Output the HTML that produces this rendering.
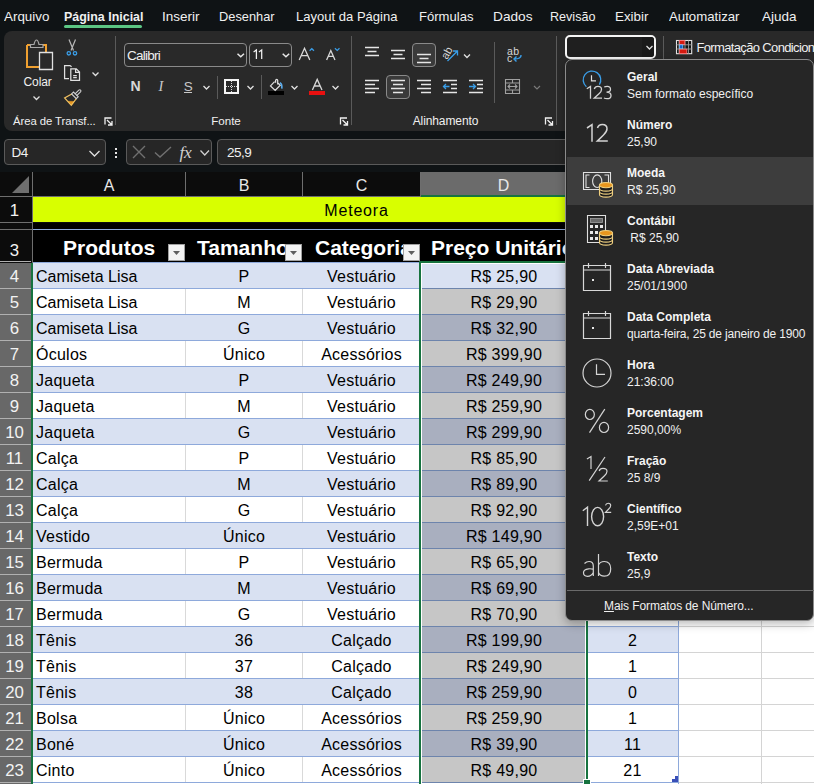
<!DOCTYPE html>
<html><head><meta charset="utf-8"><style>
html,body{margin:0;padding:0;}
body{width:814px;height:784px;overflow:hidden;position:relative;background:#131416;font-family:"Liberation Sans", sans-serif;}
.t{position:absolute;white-space:nowrap;}
.r{position:absolute;}
svg{overflow:visible;}
</style></head><body>
<div class="r" style="left:0px;top:0px;width:814px;height:784px;background:#0f1315;"></div>
<div class="r" style="left:4px;top:31px;width:830px;height:100px;background:#292929;border-radius:8px;"></div>
<div class="t" style="left:4px;top:9.57px;font-size:13.5px;line-height:13.5px;color:#f0f0f0;font-weight:normal;white-space:nowrap;"><span style="display:inline-block;transform-origin:0 0;transform:scaleX(0.993);">Arquivo</span></div>
<div class="t" style="left:64px;top:9.57px;font-size:13.5px;line-height:13.5px;color:#f0f0f0;font-weight:bold;white-space:nowrap;"><span style="display:inline-block;transform-origin:0 0;transform:scaleX(0.921);">Página Inicial</span></div>
<div class="t" style="left:162px;top:9.57px;font-size:13.5px;line-height:13.5px;color:#f0f0f0;font-weight:normal;white-space:nowrap;"><span style="display:inline-block;transform-origin:0 0;transform:scaleX(1.000);">Inserir</span></div>
<div class="t" style="left:219px;top:9.57px;font-size:13.5px;line-height:13.5px;color:#f0f0f0;font-weight:normal;white-space:nowrap;"><span style="display:inline-block;transform-origin:0 0;transform:scaleX(0.949);">Desenhar</span></div>
<div class="t" style="left:296px;top:9.57px;font-size:13.5px;line-height:13.5px;color:#f0f0f0;font-weight:normal;white-space:nowrap;"><span style="display:inline-block;transform-origin:0 0;transform:scaleX(0.966);">Layout da Página</span></div>
<div class="t" style="left:419px;top:9.57px;font-size:13.5px;line-height:13.5px;color:#f0f0f0;font-weight:normal;white-space:nowrap;"><span style="display:inline-block;transform-origin:0 0;transform:scaleX(0.968);">Fórmulas</span></div>
<div class="t" style="left:493px;top:9.57px;font-size:13.5px;line-height:13.5px;color:#f0f0f0;font-weight:normal;white-space:nowrap;"><span style="display:inline-block;transform-origin:0 0;transform:scaleX(1.013);">Dados</span></div>
<div class="t" style="left:550px;top:9.57px;font-size:13.5px;line-height:13.5px;color:#f0f0f0;font-weight:normal;white-space:nowrap;"><span style="display:inline-block;transform-origin:0 0;transform:scaleX(0.932);">Revisão</span></div>
<div class="t" style="left:615px;top:9.57px;font-size:13.5px;line-height:13.5px;color:#f0f0f0;font-weight:normal;white-space:nowrap;"><span style="display:inline-block;transform-origin:0 0;transform:scaleX(0.991);">Exibir</span></div>
<div class="t" style="left:669px;top:9.57px;font-size:13.5px;line-height:13.5px;color:#f0f0f0;font-weight:normal;white-space:nowrap;"><span style="display:inline-block;transform-origin:0 0;transform:scaleX(0.979);">Automatizar</span></div>
<div class="t" style="left:762px;top:9.57px;font-size:13.5px;line-height:13.5px;color:#f0f0f0;font-weight:normal;white-space:nowrap;"><span style="display:inline-block;transform-origin:0 0;transform:scaleX(1.000);">Ajuda</span></div>
<div class="r" style="left:64px;top:25px;width:78px;height:3px;background:#5cc583;border-radius:2px;"></div>
<div class="r" style="left:0px;top:165px;width:814px;height:7px;background:#0f1315;"></div>
<div class="r" style="left:0px;top:172px;width:814px;height:612px;background:#0c0c0c;"></div>
<div class="r" style="left:33px;top:197px;width:800px;height:25px;background:#d8ff00;"></div>
<div class="r" style="left:33px;top:223px;width:800px;height:6px;background:#000;"></div>
<div class="r" style="left:33px;top:782px;width:800px;height:2px;background:#ffffff;"></div>
<div class="r" style="left:33px;top:230px;width:800px;height:32px;background:#000;"></div>
<div class="r" style="left:33px;top:262px;width:646px;height:27px;background:#d9e1f2;"></div>
<div class="r" style="left:679px;top:262px;width:200px;height:27px;background:#ffffff;"></div>
<div class="r" style="left:33px;top:288px;width:646px;height:27px;background:#ffffff;"></div>
<div class="r" style="left:679px;top:288px;width:200px;height:27px;background:#ffffff;"></div>
<div class="r" style="left:33px;top:314px;width:646px;height:27px;background:#d9e1f2;"></div>
<div class="r" style="left:679px;top:314px;width:200px;height:27px;background:#ffffff;"></div>
<div class="r" style="left:33px;top:340px;width:646px;height:27px;background:#ffffff;"></div>
<div class="r" style="left:679px;top:340px;width:200px;height:27px;background:#ffffff;"></div>
<div class="r" style="left:33px;top:366px;width:646px;height:27px;background:#d9e1f2;"></div>
<div class="r" style="left:679px;top:366px;width:200px;height:27px;background:#ffffff;"></div>
<div class="r" style="left:33px;top:392px;width:646px;height:27px;background:#ffffff;"></div>
<div class="r" style="left:679px;top:392px;width:200px;height:27px;background:#ffffff;"></div>
<div class="r" style="left:33px;top:418px;width:646px;height:27px;background:#d9e1f2;"></div>
<div class="r" style="left:679px;top:418px;width:200px;height:27px;background:#ffffff;"></div>
<div class="r" style="left:33px;top:444px;width:646px;height:27px;background:#ffffff;"></div>
<div class="r" style="left:679px;top:444px;width:200px;height:27px;background:#ffffff;"></div>
<div class="r" style="left:33px;top:470px;width:646px;height:27px;background:#d9e1f2;"></div>
<div class="r" style="left:679px;top:470px;width:200px;height:27px;background:#ffffff;"></div>
<div class="r" style="left:33px;top:496px;width:646px;height:27px;background:#ffffff;"></div>
<div class="r" style="left:679px;top:496px;width:200px;height:27px;background:#ffffff;"></div>
<div class="r" style="left:33px;top:522px;width:646px;height:27px;background:#d9e1f2;"></div>
<div class="r" style="left:679px;top:522px;width:200px;height:27px;background:#ffffff;"></div>
<div class="r" style="left:33px;top:548px;width:646px;height:27px;background:#ffffff;"></div>
<div class="r" style="left:679px;top:548px;width:200px;height:27px;background:#ffffff;"></div>
<div class="r" style="left:33px;top:574px;width:646px;height:27px;background:#d9e1f2;"></div>
<div class="r" style="left:679px;top:574px;width:200px;height:27px;background:#ffffff;"></div>
<div class="r" style="left:33px;top:600px;width:646px;height:27px;background:#ffffff;"></div>
<div class="r" style="left:679px;top:600px;width:200px;height:27px;background:#ffffff;"></div>
<div class="r" style="left:33px;top:626px;width:646px;height:27px;background:#d9e1f2;"></div>
<div class="r" style="left:679px;top:626px;width:200px;height:27px;background:#ffffff;"></div>
<div class="r" style="left:33px;top:652px;width:646px;height:27px;background:#ffffff;"></div>
<div class="r" style="left:679px;top:652px;width:200px;height:27px;background:#ffffff;"></div>
<div class="r" style="left:33px;top:678px;width:646px;height:27px;background:#d9e1f2;"></div>
<div class="r" style="left:679px;top:678px;width:200px;height:27px;background:#ffffff;"></div>
<div class="r" style="left:33px;top:704px;width:646px;height:27px;background:#ffffff;"></div>
<div class="r" style="left:679px;top:704px;width:200px;height:27px;background:#ffffff;"></div>
<div class="r" style="left:33px;top:730px;width:646px;height:27px;background:#d9e1f2;"></div>
<div class="r" style="left:679px;top:730px;width:200px;height:27px;background:#ffffff;"></div>
<div class="r" style="left:33px;top:756px;width:646px;height:27px;background:#ffffff;"></div>
<div class="r" style="left:679px;top:756px;width:200px;height:27px;background:#ffffff;"></div>
<div class="r" style="left:679px;top:288px;width:200px;height:1px;background:#d4d4d4;"></div>
<div class="r" style="left:679px;top:314px;width:200px;height:1px;background:#d4d4d4;"></div>
<div class="r" style="left:679px;top:340px;width:200px;height:1px;background:#d4d4d4;"></div>
<div class="r" style="left:679px;top:366px;width:200px;height:1px;background:#d4d4d4;"></div>
<div class="r" style="left:679px;top:392px;width:200px;height:1px;background:#d4d4d4;"></div>
<div class="r" style="left:679px;top:418px;width:200px;height:1px;background:#d4d4d4;"></div>
<div class="r" style="left:679px;top:444px;width:200px;height:1px;background:#d4d4d4;"></div>
<div class="r" style="left:679px;top:470px;width:200px;height:1px;background:#d4d4d4;"></div>
<div class="r" style="left:679px;top:496px;width:200px;height:1px;background:#d4d4d4;"></div>
<div class="r" style="left:679px;top:522px;width:200px;height:1px;background:#d4d4d4;"></div>
<div class="r" style="left:679px;top:548px;width:200px;height:1px;background:#d4d4d4;"></div>
<div class="r" style="left:679px;top:574px;width:200px;height:1px;background:#d4d4d4;"></div>
<div class="r" style="left:679px;top:600px;width:200px;height:1px;background:#d4d4d4;"></div>
<div class="r" style="left:679px;top:626px;width:200px;height:1px;background:#d4d4d4;"></div>
<div class="r" style="left:679px;top:652px;width:200px;height:1px;background:#d4d4d4;"></div>
<div class="r" style="left:679px;top:678px;width:200px;height:1px;background:#d4d4d4;"></div>
<div class="r" style="left:679px;top:704px;width:200px;height:1px;background:#d4d4d4;"></div>
<div class="r" style="left:679px;top:730px;width:200px;height:1px;background:#d4d4d4;"></div>
<div class="r" style="left:679px;top:756px;width:200px;height:1px;background:#d4d4d4;"></div>
<div class="r" style="left:679px;top:782px;width:200px;height:1px;background:#d4d4d4;"></div>
<div class="r" style="left:761px;top:262px;width:1px;height:522px;background:#d4d4d4;"></div>
<div class="r" style="left:185px;top:289px;width:1px;height:25px;background:#d9d9d9;"></div>
<div class="r" style="left:185px;top:341px;width:1px;height:25px;background:#d9d9d9;"></div>
<div class="r" style="left:185px;top:393px;width:1px;height:25px;background:#d9d9d9;"></div>
<div class="r" style="left:185px;top:445px;width:1px;height:25px;background:#d9d9d9;"></div>
<div class="r" style="left:185px;top:497px;width:1px;height:25px;background:#d9d9d9;"></div>
<div class="r" style="left:185px;top:549px;width:1px;height:25px;background:#d9d9d9;"></div>
<div class="r" style="left:185px;top:601px;width:1px;height:25px;background:#d9d9d9;"></div>
<div class="r" style="left:185px;top:653px;width:1px;height:25px;background:#d9d9d9;"></div>
<div class="r" style="left:185px;top:705px;width:1px;height:25px;background:#d9d9d9;"></div>
<div class="r" style="left:185px;top:757px;width:1px;height:25px;background:#d9d9d9;"></div>
<div class="r" style="left:302px;top:289px;width:1px;height:25px;background:#d9d9d9;"></div>
<div class="r" style="left:302px;top:341px;width:1px;height:25px;background:#d9d9d9;"></div>
<div class="r" style="left:302px;top:393px;width:1px;height:25px;background:#d9d9d9;"></div>
<div class="r" style="left:302px;top:445px;width:1px;height:25px;background:#d9d9d9;"></div>
<div class="r" style="left:302px;top:497px;width:1px;height:25px;background:#d9d9d9;"></div>
<div class="r" style="left:302px;top:549px;width:1px;height:25px;background:#d9d9d9;"></div>
<div class="r" style="left:302px;top:601px;width:1px;height:25px;background:#d9d9d9;"></div>
<div class="r" style="left:302px;top:653px;width:1px;height:25px;background:#d9d9d9;"></div>
<div class="r" style="left:302px;top:705px;width:1px;height:25px;background:#d9d9d9;"></div>
<div class="r" style="left:302px;top:757px;width:1px;height:25px;background:#d9d9d9;"></div>
<div class="r" style="left:420px;top:289px;width:1px;height:25px;background:#d9d9d9;"></div>
<div class="r" style="left:420px;top:341px;width:1px;height:25px;background:#d9d9d9;"></div>
<div class="r" style="left:420px;top:393px;width:1px;height:25px;background:#d9d9d9;"></div>
<div class="r" style="left:420px;top:445px;width:1px;height:25px;background:#d9d9d9;"></div>
<div class="r" style="left:420px;top:497px;width:1px;height:25px;background:#d9d9d9;"></div>
<div class="r" style="left:420px;top:549px;width:1px;height:25px;background:#d9d9d9;"></div>
<div class="r" style="left:420px;top:601px;width:1px;height:25px;background:#d9d9d9;"></div>
<div class="r" style="left:420px;top:653px;width:1px;height:25px;background:#d9d9d9;"></div>
<div class="r" style="left:420px;top:705px;width:1px;height:25px;background:#d9d9d9;"></div>
<div class="r" style="left:420px;top:757px;width:1px;height:25px;background:#d9d9d9;"></div>
<div class="r" style="left:586px;top:289px;width:1px;height:25px;background:#d9d9d9;"></div>
<div class="r" style="left:586px;top:341px;width:1px;height:25px;background:#d9d9d9;"></div>
<div class="r" style="left:586px;top:393px;width:1px;height:25px;background:#d9d9d9;"></div>
<div class="r" style="left:586px;top:445px;width:1px;height:25px;background:#d9d9d9;"></div>
<div class="r" style="left:586px;top:497px;width:1px;height:25px;background:#d9d9d9;"></div>
<div class="r" style="left:586px;top:549px;width:1px;height:25px;background:#d9d9d9;"></div>
<div class="r" style="left:586px;top:601px;width:1px;height:25px;background:#d9d9d9;"></div>
<div class="r" style="left:586px;top:653px;width:1px;height:25px;background:#d9d9d9;"></div>
<div class="r" style="left:586px;top:705px;width:1px;height:25px;background:#d9d9d9;"></div>
<div class="r" style="left:586px;top:757px;width:1px;height:25px;background:#d9d9d9;"></div>
<div class="r" style="left:33px;top:229px;width:646px;height:1px;background:#8ea9db;"></div>
<div class="r" style="left:33px;top:262px;width:646px;height:1px;background:#8ea9db;"></div>
<div class="r" style="left:33px;top:288px;width:646px;height:1px;background:#8ea9db;"></div>
<div class="r" style="left:33px;top:314px;width:646px;height:1px;background:#8ea9db;"></div>
<div class="r" style="left:33px;top:340px;width:646px;height:1px;background:#8ea9db;"></div>
<div class="r" style="left:33px;top:366px;width:646px;height:1px;background:#8ea9db;"></div>
<div class="r" style="left:33px;top:392px;width:646px;height:1px;background:#8ea9db;"></div>
<div class="r" style="left:33px;top:418px;width:646px;height:1px;background:#8ea9db;"></div>
<div class="r" style="left:33px;top:444px;width:646px;height:1px;background:#8ea9db;"></div>
<div class="r" style="left:33px;top:470px;width:646px;height:1px;background:#8ea9db;"></div>
<div class="r" style="left:33px;top:496px;width:646px;height:1px;background:#8ea9db;"></div>
<div class="r" style="left:33px;top:522px;width:646px;height:1px;background:#8ea9db;"></div>
<div class="r" style="left:33px;top:548px;width:646px;height:1px;background:#8ea9db;"></div>
<div class="r" style="left:33px;top:574px;width:646px;height:1px;background:#8ea9db;"></div>
<div class="r" style="left:33px;top:600px;width:646px;height:1px;background:#8ea9db;"></div>
<div class="r" style="left:33px;top:626px;width:646px;height:1px;background:#8ea9db;"></div>
<div class="r" style="left:33px;top:652px;width:646px;height:1px;background:#8ea9db;"></div>
<div class="r" style="left:33px;top:678px;width:646px;height:1px;background:#8ea9db;"></div>
<div class="r" style="left:33px;top:704px;width:646px;height:1px;background:#8ea9db;"></div>
<div class="r" style="left:33px;top:730px;width:646px;height:1px;background:#8ea9db;"></div>
<div class="r" style="left:33px;top:756px;width:646px;height:1px;background:#8ea9db;"></div>
<div class="r" style="left:33px;top:782px;width:646px;height:1px;background:#8ea9db;"></div>
<div class="r" style="left:678px;top:229px;width:1px;height:555px;background:#8ea9db;"></div>
<div class="r" style="left:422px;top:289px;width:164px;height:25px;background:#c6c6c6;"></div>
<div class="r" style="left:421px;top:288px;width:165px;height:1px;background:#6d84ac;"></div>
<div class="r" style="left:422px;top:315px;width:164px;height:25px;background:#a9afbf;"></div>
<div class="r" style="left:421px;top:314px;width:165px;height:1px;background:#6d84ac;"></div>
<div class="r" style="left:422px;top:341px;width:164px;height:25px;background:#c6c6c6;"></div>
<div class="r" style="left:421px;top:340px;width:165px;height:1px;background:#6d84ac;"></div>
<div class="r" style="left:422px;top:367px;width:164px;height:25px;background:#a9afbf;"></div>
<div class="r" style="left:421px;top:366px;width:165px;height:1px;background:#6d84ac;"></div>
<div class="r" style="left:422px;top:393px;width:164px;height:25px;background:#c6c6c6;"></div>
<div class="r" style="left:421px;top:392px;width:165px;height:1px;background:#6d84ac;"></div>
<div class="r" style="left:422px;top:419px;width:164px;height:25px;background:#a9afbf;"></div>
<div class="r" style="left:421px;top:418px;width:165px;height:1px;background:#6d84ac;"></div>
<div class="r" style="left:422px;top:445px;width:164px;height:25px;background:#c6c6c6;"></div>
<div class="r" style="left:421px;top:444px;width:165px;height:1px;background:#6d84ac;"></div>
<div class="r" style="left:422px;top:471px;width:164px;height:25px;background:#a9afbf;"></div>
<div class="r" style="left:421px;top:470px;width:165px;height:1px;background:#6d84ac;"></div>
<div class="r" style="left:422px;top:497px;width:164px;height:25px;background:#c6c6c6;"></div>
<div class="r" style="left:421px;top:496px;width:165px;height:1px;background:#6d84ac;"></div>
<div class="r" style="left:422px;top:523px;width:164px;height:25px;background:#a9afbf;"></div>
<div class="r" style="left:421px;top:522px;width:165px;height:1px;background:#6d84ac;"></div>
<div class="r" style="left:422px;top:549px;width:164px;height:25px;background:#c6c6c6;"></div>
<div class="r" style="left:421px;top:548px;width:165px;height:1px;background:#6d84ac;"></div>
<div class="r" style="left:422px;top:575px;width:164px;height:25px;background:#a9afbf;"></div>
<div class="r" style="left:421px;top:574px;width:165px;height:1px;background:#6d84ac;"></div>
<div class="r" style="left:422px;top:601px;width:164px;height:25px;background:#c6c6c6;"></div>
<div class="r" style="left:421px;top:600px;width:165px;height:1px;background:#6d84ac;"></div>
<div class="r" style="left:422px;top:627px;width:164px;height:25px;background:#a9afbf;"></div>
<div class="r" style="left:421px;top:626px;width:165px;height:1px;background:#6d84ac;"></div>
<div class="r" style="left:422px;top:653px;width:164px;height:25px;background:#c6c6c6;"></div>
<div class="r" style="left:421px;top:652px;width:165px;height:1px;background:#6d84ac;"></div>
<div class="r" style="left:422px;top:679px;width:164px;height:25px;background:#a9afbf;"></div>
<div class="r" style="left:421px;top:678px;width:165px;height:1px;background:#6d84ac;"></div>
<div class="r" style="left:422px;top:705px;width:164px;height:25px;background:#c6c6c6;"></div>
<div class="r" style="left:421px;top:704px;width:165px;height:1px;background:#6d84ac;"></div>
<div class="r" style="left:422px;top:731px;width:164px;height:25px;background:#a9afbf;"></div>
<div class="r" style="left:421px;top:730px;width:165px;height:1px;background:#6d84ac;"></div>
<div class="r" style="left:422px;top:757px;width:164px;height:25px;background:#c6c6c6;"></div>
<div class="r" style="left:421px;top:756px;width:165px;height:1px;background:#6d84ac;"></div>
<div class="r" style="left:421px;top:782px;width:165px;height:1px;background:#6d84ac;"></div>
<div class="r" style="left:419px;top:261px;width:2px;height:523px;background:#17733f;"></div>
<div class="r" style="left:419px;top:261px;width:169px;height:2px;background:#17733f;"></div>
<div class="r" style="left:586px;top:261px;width:2px;height:523px;background:#17733f;"></div>
<div class="r" style="left:421px;top:263px;width:1px;height:521px;background:#ffffff;"></div>
<div class="r" style="left:421px;top:263px;width:165px;height:1px;background:#ffffff;"></div>
<div class="r" style="left:585px;top:263px;width:1px;height:521px;background:#ffffff;"></div>
<div class="r" style="left:584px;top:780px;width:6px;height:6px;background:#17733f;outline:1px solid #fff;"></div>
<div class="r" style="left:672px;top:779px;width:6px;height:3px;background:#3a4fb8;"></div>
<div class="r" style="left:675px;top:776px;width:3px;height:3px;background:#3a4fb8;"></div>
<div class="r" style="left:33px;top:172px;width:553px;height:24px;background:#0c0c0c;"></div>
<div class="r" style="left:421px;top:172px;width:166px;height:23px;background:#6b6b6b;"></div>
<div class="r" style="left:421px;top:195px;width:166px;height:2px;background:#17733f;"></div>
<div class="r" style="left:185px;top:172px;width:1px;height:24px;background:#6e6e6e;"></div>
<div class="r" style="left:302px;top:172px;width:1px;height:24px;background:#6e6e6e;"></div>
<div class="r" style="left:420px;top:172px;width:1px;height:24px;background:#6e6e6e;"></div>
<div class="r" style="left:0px;top:196px;width:421px;height:1px;background:#6e6e6e;"></div>
<svg class="r" style="left:12px;top:176px" width="18" height="18"><path d="M17 0 L17 17 L0 17 Z" fill="#6f6f6f"/></svg>
<div class="r" style="left:32px;top:172px;width:1px;height:612px;background:#6e6e6e;"></div>
<div class="t" style="left:-191.0px;width:600px;text-align:center;top:178.46px;font-size:16px;line-height:16px;color:#e8e8e8;font-weight:normal;">A</div>
<div class="t" style="left:-56.0px;width:600px;text-align:center;top:178.46px;font-size:16px;line-height:16px;color:#e8e8e8;font-weight:normal;">B</div>
<div class="t" style="left:61.5px;width:600px;text-align:center;top:178.46px;font-size:16px;line-height:16px;color:#e8e8e8;font-weight:normal;">C</div>
<div class="t" style="left:203.5px;width:600px;text-align:center;top:178.46px;font-size:16px;line-height:16px;color:#e8e8e8;font-weight:normal;">D</div>
<div class="r" style="left:0px;top:263px;width:31px;height:521px;background:#686868;"></div>
<div class="r" style="left:31px;top:263px;width:2px;height:521px;background:#17733f;"></div>
<div class="r" style="left:0px;top:222px;width:32px;height:1px;background:#6e6e6e;"></div>
<div class="r" style="left:0px;top:229px;width:32px;height:1px;background:#6e6e6e;"></div>
<div class="r" style="left:0px;top:261px;width:31px;height:1px;background:#b0b0b0;"></div>
<div class="r" style="left:0px;top:288px;width:31px;height:1px;background:#b0b0b0;"></div>
<div class="r" style="left:0px;top:314px;width:31px;height:1px;background:#b0b0b0;"></div>
<div class="r" style="left:0px;top:340px;width:31px;height:1px;background:#b0b0b0;"></div>
<div class="r" style="left:0px;top:366px;width:31px;height:1px;background:#b0b0b0;"></div>
<div class="r" style="left:0px;top:392px;width:31px;height:1px;background:#b0b0b0;"></div>
<div class="r" style="left:0px;top:418px;width:31px;height:1px;background:#b0b0b0;"></div>
<div class="r" style="left:0px;top:444px;width:31px;height:1px;background:#b0b0b0;"></div>
<div class="r" style="left:0px;top:470px;width:31px;height:1px;background:#b0b0b0;"></div>
<div class="r" style="left:0px;top:496px;width:31px;height:1px;background:#b0b0b0;"></div>
<div class="r" style="left:0px;top:522px;width:31px;height:1px;background:#b0b0b0;"></div>
<div class="r" style="left:0px;top:548px;width:31px;height:1px;background:#b0b0b0;"></div>
<div class="r" style="left:0px;top:574px;width:31px;height:1px;background:#b0b0b0;"></div>
<div class="r" style="left:0px;top:600px;width:31px;height:1px;background:#b0b0b0;"></div>
<div class="r" style="left:0px;top:626px;width:31px;height:1px;background:#b0b0b0;"></div>
<div class="r" style="left:0px;top:652px;width:31px;height:1px;background:#b0b0b0;"></div>
<div class="r" style="left:0px;top:678px;width:31px;height:1px;background:#b0b0b0;"></div>
<div class="r" style="left:0px;top:704px;width:31px;height:1px;background:#b0b0b0;"></div>
<div class="r" style="left:0px;top:730px;width:31px;height:1px;background:#b0b0b0;"></div>
<div class="r" style="left:0px;top:756px;width:31px;height:1px;background:#b0b0b0;"></div>
<div class="r" style="left:0px;top:782px;width:31px;height:1px;background:#b0b0b0;"></div>
<div class="t" style="left:-285.5px;width:600px;text-align:center;top:203.28px;font-size:16.8px;line-height:16.8px;color:#f2f2f2;font-weight:normal;">1</div>
<div class="t" style="left:-285.5px;width:600px;text-align:center;top:242.78px;font-size:16.8px;line-height:16.8px;color:#f2f2f2;font-weight:normal;">3</div>
<div class="t" style="left:-285.5px;width:600px;text-align:center;top:269.28px;font-size:16.8px;line-height:16.8px;color:#f2f2f2;font-weight:normal;">4</div>
<div class="t" style="left:-285.5px;width:600px;text-align:center;top:295.28px;font-size:16.8px;line-height:16.8px;color:#f2f2f2;font-weight:normal;">5</div>
<div class="t" style="left:-285.5px;width:600px;text-align:center;top:321.28px;font-size:16.8px;line-height:16.8px;color:#f2f2f2;font-weight:normal;">6</div>
<div class="t" style="left:-285.5px;width:600px;text-align:center;top:347.28px;font-size:16.8px;line-height:16.8px;color:#f2f2f2;font-weight:normal;">7</div>
<div class="t" style="left:-285.5px;width:600px;text-align:center;top:373.28px;font-size:16.8px;line-height:16.8px;color:#f2f2f2;font-weight:normal;">8</div>
<div class="t" style="left:-285.5px;width:600px;text-align:center;top:399.28px;font-size:16.8px;line-height:16.8px;color:#f2f2f2;font-weight:normal;">9</div>
<div class="t" style="left:-285.5px;width:600px;text-align:center;top:425.28px;font-size:16.8px;line-height:16.8px;color:#f2f2f2;font-weight:normal;">10</div>
<div class="t" style="left:-285.5px;width:600px;text-align:center;top:451.28px;font-size:16.8px;line-height:16.8px;color:#f2f2f2;font-weight:normal;">11</div>
<div class="t" style="left:-285.5px;width:600px;text-align:center;top:477.28px;font-size:16.8px;line-height:16.8px;color:#f2f2f2;font-weight:normal;">12</div>
<div class="t" style="left:-285.5px;width:600px;text-align:center;top:503.28px;font-size:16.8px;line-height:16.8px;color:#f2f2f2;font-weight:normal;">13</div>
<div class="t" style="left:-285.5px;width:600px;text-align:center;top:529.28px;font-size:16.8px;line-height:16.8px;color:#f2f2f2;font-weight:normal;">14</div>
<div class="t" style="left:-285.5px;width:600px;text-align:center;top:555.28px;font-size:16.8px;line-height:16.8px;color:#f2f2f2;font-weight:normal;">15</div>
<div class="t" style="left:-285.5px;width:600px;text-align:center;top:581.28px;font-size:16.8px;line-height:16.8px;color:#f2f2f2;font-weight:normal;">16</div>
<div class="t" style="left:-285.5px;width:600px;text-align:center;top:607.28px;font-size:16.8px;line-height:16.8px;color:#f2f2f2;font-weight:normal;">17</div>
<div class="t" style="left:-285.5px;width:600px;text-align:center;top:633.28px;font-size:16.8px;line-height:16.8px;color:#f2f2f2;font-weight:normal;">18</div>
<div class="t" style="left:-285.5px;width:600px;text-align:center;top:659.28px;font-size:16.8px;line-height:16.8px;color:#f2f2f2;font-weight:normal;">19</div>
<div class="t" style="left:-285.5px;width:600px;text-align:center;top:685.28px;font-size:16.8px;line-height:16.8px;color:#f2f2f2;font-weight:normal;">20</div>
<div class="t" style="left:-285.5px;width:600px;text-align:center;top:711.28px;font-size:16.8px;line-height:16.8px;color:#f2f2f2;font-weight:normal;">21</div>
<div class="t" style="left:-285.5px;width:600px;text-align:center;top:737.28px;font-size:16.8px;line-height:16.8px;color:#f2f2f2;font-weight:normal;">22</div>
<div class="t" style="left:-285.5px;width:600px;text-align:center;top:763.28px;font-size:16.8px;line-height:16.8px;color:#f2f2f2;font-weight:normal;">23</div>
<div class="t" style="left:36px;top:268.66px;font-size:16px;line-height:16px;color:#000;font-weight:normal;">Camiseta Lisa</div>
<div class="t" style="left:-56px;width:600px;text-align:center;top:268.66px;font-size:16px;line-height:16px;color:#000;font-weight:normal;letter-spacing:0.25px;">P</div>
<div class="t" style="left:61.5px;width:600px;text-align:center;top:268.66px;font-size:16px;line-height:16px;color:#000;font-weight:normal;letter-spacing:0.25px;">Vestuário</div>
<div class="t" style="left:204px;width:600px;text-align:center;top:268.66px;font-size:16px;line-height:16px;color:#000;font-weight:normal;letter-spacing:0.25px;">R$ 25,90</div>
<div class="t" style="left:36px;top:294.66px;font-size:16px;line-height:16px;color:#000;font-weight:normal;">Camiseta Lisa</div>
<div class="t" style="left:-56px;width:600px;text-align:center;top:294.66px;font-size:16px;line-height:16px;color:#000;font-weight:normal;letter-spacing:0.25px;">M</div>
<div class="t" style="left:61.5px;width:600px;text-align:center;top:294.66px;font-size:16px;line-height:16px;color:#000;font-weight:normal;letter-spacing:0.25px;">Vestuário</div>
<div class="t" style="left:204px;width:600px;text-align:center;top:294.66px;font-size:16px;line-height:16px;color:#000;font-weight:normal;letter-spacing:0.25px;">R$ 29,90</div>
<div class="t" style="left:36px;top:320.66px;font-size:16px;line-height:16px;color:#000;font-weight:normal;">Camiseta Lisa</div>
<div class="t" style="left:-56px;width:600px;text-align:center;top:320.66px;font-size:16px;line-height:16px;color:#000;font-weight:normal;letter-spacing:0.25px;">G</div>
<div class="t" style="left:61.5px;width:600px;text-align:center;top:320.66px;font-size:16px;line-height:16px;color:#000;font-weight:normal;letter-spacing:0.25px;">Vestuário</div>
<div class="t" style="left:204px;width:600px;text-align:center;top:320.66px;font-size:16px;line-height:16px;color:#000;font-weight:normal;letter-spacing:0.25px;">R$ 32,90</div>
<div class="t" style="left:36px;top:346.66px;font-size:16px;line-height:16px;color:#000;font-weight:normal;letter-spacing:0.25px;">Óculos</div>
<div class="t" style="left:-56px;width:600px;text-align:center;top:346.66px;font-size:16px;line-height:16px;color:#000;font-weight:normal;letter-spacing:0.25px;">Único</div>
<div class="t" style="left:61.5px;width:600px;text-align:center;top:346.66px;font-size:16px;line-height:16px;color:#000;font-weight:normal;letter-spacing:0.25px;">Acessórios</div>
<div class="t" style="left:204px;width:600px;text-align:center;top:346.66px;font-size:16px;line-height:16px;color:#000;font-weight:normal;letter-spacing:0.25px;">R$ 399,90</div>
<div class="t" style="left:36px;top:372.66px;font-size:16px;line-height:16px;color:#000;font-weight:normal;letter-spacing:0.25px;">Jaqueta</div>
<div class="t" style="left:-56px;width:600px;text-align:center;top:372.66px;font-size:16px;line-height:16px;color:#000;font-weight:normal;letter-spacing:0.25px;">P</div>
<div class="t" style="left:61.5px;width:600px;text-align:center;top:372.66px;font-size:16px;line-height:16px;color:#000;font-weight:normal;letter-spacing:0.25px;">Vestuário</div>
<div class="t" style="left:204px;width:600px;text-align:center;top:372.66px;font-size:16px;line-height:16px;color:#000;font-weight:normal;letter-spacing:0.25px;">R$ 249,90</div>
<div class="t" style="left:36px;top:398.66px;font-size:16px;line-height:16px;color:#000;font-weight:normal;letter-spacing:0.25px;">Jaqueta</div>
<div class="t" style="left:-56px;width:600px;text-align:center;top:398.66px;font-size:16px;line-height:16px;color:#000;font-weight:normal;letter-spacing:0.25px;">M</div>
<div class="t" style="left:61.5px;width:600px;text-align:center;top:398.66px;font-size:16px;line-height:16px;color:#000;font-weight:normal;letter-spacing:0.25px;">Vestuário</div>
<div class="t" style="left:204px;width:600px;text-align:center;top:398.66px;font-size:16px;line-height:16px;color:#000;font-weight:normal;letter-spacing:0.25px;">R$ 259,90</div>
<div class="t" style="left:36px;top:424.66px;font-size:16px;line-height:16px;color:#000;font-weight:normal;letter-spacing:0.25px;">Jaqueta</div>
<div class="t" style="left:-56px;width:600px;text-align:center;top:424.66px;font-size:16px;line-height:16px;color:#000;font-weight:normal;letter-spacing:0.25px;">G</div>
<div class="t" style="left:61.5px;width:600px;text-align:center;top:424.66px;font-size:16px;line-height:16px;color:#000;font-weight:normal;letter-spacing:0.25px;">Vestuário</div>
<div class="t" style="left:204px;width:600px;text-align:center;top:424.66px;font-size:16px;line-height:16px;color:#000;font-weight:normal;letter-spacing:0.25px;">R$ 299,90</div>
<div class="t" style="left:36px;top:450.66px;font-size:16px;line-height:16px;color:#000;font-weight:normal;letter-spacing:0.25px;">Calça</div>
<div class="t" style="left:-56px;width:600px;text-align:center;top:450.66px;font-size:16px;line-height:16px;color:#000;font-weight:normal;letter-spacing:0.25px;">P</div>
<div class="t" style="left:61.5px;width:600px;text-align:center;top:450.66px;font-size:16px;line-height:16px;color:#000;font-weight:normal;letter-spacing:0.25px;">Vestuário</div>
<div class="t" style="left:204px;width:600px;text-align:center;top:450.66px;font-size:16px;line-height:16px;color:#000;font-weight:normal;letter-spacing:0.25px;">R$ 85,90</div>
<div class="t" style="left:36px;top:476.66px;font-size:16px;line-height:16px;color:#000;font-weight:normal;letter-spacing:0.25px;">Calça</div>
<div class="t" style="left:-56px;width:600px;text-align:center;top:476.66px;font-size:16px;line-height:16px;color:#000;font-weight:normal;letter-spacing:0.25px;">M</div>
<div class="t" style="left:61.5px;width:600px;text-align:center;top:476.66px;font-size:16px;line-height:16px;color:#000;font-weight:normal;letter-spacing:0.25px;">Vestuário</div>
<div class="t" style="left:204px;width:600px;text-align:center;top:476.66px;font-size:16px;line-height:16px;color:#000;font-weight:normal;letter-spacing:0.25px;">R$ 89,90</div>
<div class="t" style="left:36px;top:502.66px;font-size:16px;line-height:16px;color:#000;font-weight:normal;letter-spacing:0.25px;">Calça</div>
<div class="t" style="left:-56px;width:600px;text-align:center;top:502.66px;font-size:16px;line-height:16px;color:#000;font-weight:normal;letter-spacing:0.25px;">G</div>
<div class="t" style="left:61.5px;width:600px;text-align:center;top:502.66px;font-size:16px;line-height:16px;color:#000;font-weight:normal;letter-spacing:0.25px;">Vestuário</div>
<div class="t" style="left:204px;width:600px;text-align:center;top:502.66px;font-size:16px;line-height:16px;color:#000;font-weight:normal;letter-spacing:0.25px;">R$ 92,90</div>
<div class="t" style="left:36px;top:528.66px;font-size:16px;line-height:16px;color:#000;font-weight:normal;letter-spacing:0.25px;">Vestido</div>
<div class="t" style="left:-56px;width:600px;text-align:center;top:528.66px;font-size:16px;line-height:16px;color:#000;font-weight:normal;letter-spacing:0.25px;">Único</div>
<div class="t" style="left:61.5px;width:600px;text-align:center;top:528.66px;font-size:16px;line-height:16px;color:#000;font-weight:normal;letter-spacing:0.25px;">Vestuário</div>
<div class="t" style="left:204px;width:600px;text-align:center;top:528.66px;font-size:16px;line-height:16px;color:#000;font-weight:normal;letter-spacing:0.25px;">R$ 149,90</div>
<div class="t" style="left:36px;top:554.66px;font-size:16px;line-height:16px;color:#000;font-weight:normal;letter-spacing:0.25px;">Bermuda</div>
<div class="t" style="left:-56px;width:600px;text-align:center;top:554.66px;font-size:16px;line-height:16px;color:#000;font-weight:normal;letter-spacing:0.25px;">P</div>
<div class="t" style="left:61.5px;width:600px;text-align:center;top:554.66px;font-size:16px;line-height:16px;color:#000;font-weight:normal;letter-spacing:0.25px;">Vestuário</div>
<div class="t" style="left:204px;width:600px;text-align:center;top:554.66px;font-size:16px;line-height:16px;color:#000;font-weight:normal;letter-spacing:0.25px;">R$ 65,90</div>
<div class="t" style="left:36px;top:580.66px;font-size:16px;line-height:16px;color:#000;font-weight:normal;letter-spacing:0.25px;">Bermuda</div>
<div class="t" style="left:-56px;width:600px;text-align:center;top:580.66px;font-size:16px;line-height:16px;color:#000;font-weight:normal;letter-spacing:0.25px;">M</div>
<div class="t" style="left:61.5px;width:600px;text-align:center;top:580.66px;font-size:16px;line-height:16px;color:#000;font-weight:normal;letter-spacing:0.25px;">Vestuário</div>
<div class="t" style="left:204px;width:600px;text-align:center;top:580.66px;font-size:16px;line-height:16px;color:#000;font-weight:normal;letter-spacing:0.25px;">R$ 69,90</div>
<div class="t" style="left:36px;top:606.66px;font-size:16px;line-height:16px;color:#000;font-weight:normal;letter-spacing:0.25px;">Bermuda</div>
<div class="t" style="left:-56px;width:600px;text-align:center;top:606.66px;font-size:16px;line-height:16px;color:#000;font-weight:normal;letter-spacing:0.25px;">G</div>
<div class="t" style="left:61.5px;width:600px;text-align:center;top:606.66px;font-size:16px;line-height:16px;color:#000;font-weight:normal;letter-spacing:0.25px;">Vestuário</div>
<div class="t" style="left:204px;width:600px;text-align:center;top:606.66px;font-size:16px;line-height:16px;color:#000;font-weight:normal;letter-spacing:0.25px;">R$ 70,90</div>
<div class="t" style="left:36px;top:632.66px;font-size:16px;line-height:16px;color:#000;font-weight:normal;letter-spacing:0.25px;">Tênis</div>
<div class="t" style="left:-56px;width:600px;text-align:center;top:632.66px;font-size:16px;line-height:16px;color:#000;font-weight:normal;letter-spacing:0.25px;">36</div>
<div class="t" style="left:61.5px;width:600px;text-align:center;top:632.66px;font-size:16px;line-height:16px;color:#000;font-weight:normal;letter-spacing:0.25px;">Calçado</div>
<div class="t" style="left:204px;width:600px;text-align:center;top:632.66px;font-size:16px;line-height:16px;color:#000;font-weight:normal;letter-spacing:0.25px;">R$ 199,90</div>
<div class="t" style="left:332.5px;width:600px;text-align:center;top:632.66px;font-size:16px;line-height:16px;color:#000;font-weight:normal;letter-spacing:0.25px;">2</div>
<div class="t" style="left:36px;top:658.66px;font-size:16px;line-height:16px;color:#000;font-weight:normal;letter-spacing:0.25px;">Tênis</div>
<div class="t" style="left:-56px;width:600px;text-align:center;top:658.66px;font-size:16px;line-height:16px;color:#000;font-weight:normal;letter-spacing:0.25px;">37</div>
<div class="t" style="left:61.5px;width:600px;text-align:center;top:658.66px;font-size:16px;line-height:16px;color:#000;font-weight:normal;letter-spacing:0.25px;">Calçado</div>
<div class="t" style="left:204px;width:600px;text-align:center;top:658.66px;font-size:16px;line-height:16px;color:#000;font-weight:normal;letter-spacing:0.25px;">R$ 249,90</div>
<div class="t" style="left:332.5px;width:600px;text-align:center;top:658.66px;font-size:16px;line-height:16px;color:#000;font-weight:normal;letter-spacing:0.25px;">1</div>
<div class="t" style="left:36px;top:684.66px;font-size:16px;line-height:16px;color:#000;font-weight:normal;letter-spacing:0.25px;">Tênis</div>
<div class="t" style="left:-56px;width:600px;text-align:center;top:684.66px;font-size:16px;line-height:16px;color:#000;font-weight:normal;letter-spacing:0.25px;">38</div>
<div class="t" style="left:61.5px;width:600px;text-align:center;top:684.66px;font-size:16px;line-height:16px;color:#000;font-weight:normal;letter-spacing:0.25px;">Calçado</div>
<div class="t" style="left:204px;width:600px;text-align:center;top:684.66px;font-size:16px;line-height:16px;color:#000;font-weight:normal;letter-spacing:0.25px;">R$ 259,90</div>
<div class="t" style="left:332.5px;width:600px;text-align:center;top:684.66px;font-size:16px;line-height:16px;color:#000;font-weight:normal;letter-spacing:0.25px;">0</div>
<div class="t" style="left:36px;top:710.66px;font-size:16px;line-height:16px;color:#000;font-weight:normal;letter-spacing:0.25px;">Bolsa</div>
<div class="t" style="left:-56px;width:600px;text-align:center;top:710.66px;font-size:16px;line-height:16px;color:#000;font-weight:normal;letter-spacing:0.25px;">Único</div>
<div class="t" style="left:61.5px;width:600px;text-align:center;top:710.66px;font-size:16px;line-height:16px;color:#000;font-weight:normal;letter-spacing:0.25px;">Acessórios</div>
<div class="t" style="left:204px;width:600px;text-align:center;top:710.66px;font-size:16px;line-height:16px;color:#000;font-weight:normal;letter-spacing:0.25px;">R$ 259,90</div>
<div class="t" style="left:332.5px;width:600px;text-align:center;top:710.66px;font-size:16px;line-height:16px;color:#000;font-weight:normal;letter-spacing:0.25px;">1</div>
<div class="t" style="left:36px;top:736.66px;font-size:16px;line-height:16px;color:#000;font-weight:normal;letter-spacing:0.25px;">Boné</div>
<div class="t" style="left:-56px;width:600px;text-align:center;top:736.66px;font-size:16px;line-height:16px;color:#000;font-weight:normal;letter-spacing:0.25px;">Único</div>
<div class="t" style="left:61.5px;width:600px;text-align:center;top:736.66px;font-size:16px;line-height:16px;color:#000;font-weight:normal;letter-spacing:0.25px;">Acessórios</div>
<div class="t" style="left:204px;width:600px;text-align:center;top:736.66px;font-size:16px;line-height:16px;color:#000;font-weight:normal;letter-spacing:0.25px;">R$ 39,90</div>
<div class="t" style="left:332.5px;width:600px;text-align:center;top:736.66px;font-size:16px;line-height:16px;color:#000;font-weight:normal;letter-spacing:0.25px;">11</div>
<div class="t" style="left:36px;top:762.66px;font-size:16px;line-height:16px;color:#000;font-weight:normal;letter-spacing:0.25px;">Cinto</div>
<div class="t" style="left:-56px;width:600px;text-align:center;top:762.66px;font-size:16px;line-height:16px;color:#000;font-weight:normal;letter-spacing:0.25px;">Único</div>
<div class="t" style="left:61.5px;width:600px;text-align:center;top:762.66px;font-size:16px;line-height:16px;color:#000;font-weight:normal;letter-spacing:0.25px;">Acessórios</div>
<div class="t" style="left:204px;width:600px;text-align:center;top:762.66px;font-size:16px;line-height:16px;color:#000;font-weight:normal;letter-spacing:0.25px;">R$ 49,90</div>
<div class="t" style="left:332.5px;width:600px;text-align:center;top:762.66px;font-size:16px;line-height:16px;color:#000;font-weight:normal;letter-spacing:0.25px;">21</div>
<div class="t" style="left:56.5px;width:600px;text-align:center;top:202.96px;font-size:16px;line-height:16px;color:#000;font-weight:normal;letter-spacing:0.8px;">Meteora</div>
<div class="t" style="left:63px;top:237.22px;font-size:21px;line-height:21px;color:#fff;font-weight:bold;">Produtos</div>
<div class="r" style="left:196px;top:230px;width:89px;height:32px;overflow:hidden;">
<div class="t" style="left:1px;top:7.22px;font-size:21px;line-height:21px;color:#fff;font-weight:bold;">Tamanho</div>
</div>
<div class="r" style="left:314px;top:230px;width:89px;height:32px;overflow:hidden;">
<div class="t" style="left:1px;top:7.22px;font-size:21px;line-height:21px;color:#fff;font-weight:bold;">Categoria</div>
</div>
<div class="t" style="left:431px;top:237.22px;font-size:21px;line-height:21px;color:#fff;font-weight:bold;">Preço Unitário</div>
<div class="r" style="left:168px;top:244px;width:15px;height:15px;background:#f3f3f3;border:1px solid #a0a0a0;"></div>
<svg class="r" style="left:173px;top:251px" width="8" height="5"><path d="M0 0 L7 0 L3.5 4 Z" fill="#5f5f5f"/></svg>
<div class="r" style="left:285px;top:244px;width:15px;height:15px;background:#f3f3f3;border:1px solid #a0a0a0;"></div>
<svg class="r" style="left:290px;top:251px" width="8" height="5"><path d="M0 0 L7 0 L3.5 4 Z" fill="#5f5f5f"/></svg>
<div class="r" style="left:403px;top:244px;width:15px;height:15px;background:#f3f3f3;border:1px solid #a0a0a0;"></div>
<svg class="r" style="left:408px;top:251px" width="8" height="5"><path d="M0 0 L7 0 L3.5 4 Z" fill="#5f5f5f"/></svg>
<div class="r" style="left:4px;top:139px;width:100px;height:24px;border:1px solid #5a5a5a;background:#262626;border-radius:4px;"></div>
<div class="t" style="left:11.5px;top:145.57px;font-size:13.5px;line-height:13.5px;color:#f0f0f0;font-weight:normal;letter-spacing:-0.6px;">D4</div>
<div class="r" style="left:126px;top:139px;width:84px;height:24px;border:1px solid #5a5a5a;background:#262626;border-radius:4px;"></div>
<div class="r" style="left:216.5px;top:139px;width:698px;height:24px;border:1px solid #5a5a5a;background:#262626;border-radius:4px;"></div>
<div class="t" style="left:227px;top:145.57px;font-size:13.5px;line-height:13.5px;color:#f0f0f0;font-weight:normal;letter-spacing:-0.5px;">25,9</div>
<div class="r" style="left:115px;top:147.5px;width:2px;height:2px;background:#e6e6e6;"></div>
<div class="r" style="left:115px;top:151.5px;width:2px;height:2px;background:#e6e6e6;"></div>
<div class="r" style="left:115px;top:155.5px;width:2px;height:2px;background:#e6e6e6;"></div>
<div class="r" style="left:115px;top:36px;width:1px;height:89px;background:#5a5a5a;"></div>
<div class="r" style="left:351px;top:36px;width:1px;height:89px;background:#5a5a5a;"></div>
<div class="r" style="left:556px;top:36px;width:1px;height:89px;background:#5a5a5a;"></div>
<div class="r" style="left:217px;top:75.5px;width:1px;height:23.0px;background:#5a5a5a;"></div>
<div class="r" style="left:261px;top:75px;width:1px;height:24px;background:#5a5a5a;"></div>
<div class="r" style="left:494px;top:42px;width:1px;height:61px;background:#5a5a5a;"></div>
<div class="r" style="left:663px;top:36px;width:1px;height:23px;background:#5a5a5a;"></div>
<div class="t" style="left:23.5px;top:75.84px;font-size:12px;line-height:12px;color:#f0f0f0;font-weight:normal;letter-spacing:-0.1px;">Colar</div>
<div class="t" style="left:13px;top:115.63px;font-size:11.3px;line-height:11.3px;color:#f0f0f0;font-weight:normal;letter-spacing:-0.05px;">Área de Transf...</div>
<div class="r" style="left:124px;top:43px;width:121px;height:22px;border:1px solid #8a8a8a;background:#292929;border-radius:4px;"></div>
<div class="r" style="left:249px;top:43px;width:41px;height:22px;border:1px solid #8a8a8a;background:#292929;border-radius:4px;"></div>
<div class="t" style="left:127px;top:48.57px;font-size:13.5px;line-height:13.5px;color:#f0f0f0;font-weight:normal;letter-spacing:-0.75px;">Calibri</div>
<div class="t" style="left:130.5px;top:79.35px;font-size:14px;line-height:14px;color:#d8d8d8;font-weight:bold;">N</div>
<div class="t" style="left:158.5px;top:78.93px;font-size:14.5px;line-height:14.5px;color:#c8c8c8;font-weight:normal;font-family:'Liberation Serif', serif;"><i>I</i></div>
<div class="t" style="left:183.7px;top:79.57px;font-size:13.5px;line-height:13.5px;color:#c8c8c8;font-weight:normal;">S</div>
<div class="r" style="left:184px;top:92px;width:8px;height:1.2px;background:#c8c8c8;"></div>
<div class="r" style="left:268px;top:91px;width:16px;height:4px;background:#000;"></div>
<div class="r" style="left:309px;top:91px;width:16px;height:4px;background:#e81010;"></div>
<div class="t" style="left:-74px;width:600px;text-align:center;top:114.68px;font-size:11.6px;line-height:11.6px;color:#f0f0f0;font-weight:normal;">Fonte</div>
<div class="r" style="left:412px;top:43px;width:22px;height:22px;border:1px solid #8a8a8a;background:#3a3a3a;border-radius:4px;"></div>
<div class="r" style="left:386px;top:75px;width:22px;height:22px;border:1px solid #8a8a8a;background:#3a3a3a;border-radius:4px;"></div>
<div class="t" style="left:145.5px;width:600px;text-align:center;top:115.14px;font-size:12px;line-height:12px;color:#f0f0f0;font-weight:normal;letter-spacing:-0.1px;">Alinhamento</div>
<div class="r" style="left:565px;top:35px;width:87px;height:20px;border:2px solid #f5f5f5;border-radius:5px;background:#1f1f1f;"></div>
<div class="r" style="left:642px;top:37px;width:12px;height:20px;background:#1a1a1a;border-radius:0 3px 3px 0;"></div>
<div class="t" style="left:696.5px;top:40.80px;font-size:13px;line-height:13px;color:#f0f0f0;font-weight:normal;letter-spacing:-0.65px;">Formatação Condicional</div>
<svg class="r" style="left:0;top:0" width="814" height="784"><path d="M89.5 151 L94.5 156 L99.5 151" stroke="#e0e0e0" stroke-width="1.3" fill="none" /><path d="M133 146 L145 158 M145 146 L133 158" stroke="#707070" stroke-width="1.4" fill="none" /><path d="M155 152.5 L160 157 L171 147" stroke="#707070" stroke-width="1.4" fill="none" /><path d="M200.5 150.5 L204.75 155.0 L209.0 150.5" stroke="#d0d0d0" stroke-width="1.3" fill="none" /><path d="M27 45 H31 M42 45 H46 V52 M27 45 V67 H39" stroke="#f0a030" stroke-width="2" fill="none" /><path d="M30.5 47.5 H43 V44.5 H39 Q38 40 36.5 40 Q35 40 34 44.5 H30.5 Z" stroke="#a8a8a8" stroke-width="1.2" fill="#292929" /><path d="M39.5 52.5 H52.5 V69.5 H39.5 Z" stroke="#e0e0e0" stroke-width="1.3" fill="#292929" /><path d="M33.5 96.5 L36.5 99.5 L39.5 96.5" stroke="#e0e0e0" stroke-width="1.3" fill="none" /><path d="M69 39.5 L73.5 50.5 M75.5 39.5 L71 50.5" stroke="#b8b8b8" stroke-width="1.2" fill="none" /><circle cx="68.8" cy="53.3" r="1.7" stroke="#3a9ee8" stroke-width="1.3" fill="none"/><circle cx="75" cy="53.3" r="1.7" stroke="#3a9ee8" stroke-width="1.3" fill="none"/><path d="M69 78.5 H64.6 V65.6 H70 L71.6 66.8" stroke="#e0e0e0" stroke-width="1.25" fill="none" /><path d="M70.8 68.8 H76.3 L79.5 72 V80.4 H70.8 Z M75.6 68.8 V72.3 H79.5 M73.2 75.5 H76.8 M73.2 77.5 H76.8" stroke="#e0e0e0" stroke-width="1.25" fill="none" /><path d="M92.5 72.5 L95.5 75.5 L98.5 72.5" stroke="#e0e0e0" stroke-width="1.3" fill="none" /><path d="M71.5 105 L67.8 101.3 L74.3 101.5 Z" stroke="#e8961e" stroke-width="0.5" fill="#e8961e" /><path d="M71.8 94 L64.6 98 L71.3 105.3 L76.3 98.6" stroke="#f0c060" stroke-width="1.2" fill="none" /><path d="M71.6 93.9 L73.5 92 L78.2 96.7 L76.3 98.6 Z" stroke="#d0d0d0" stroke-width="1.1" fill="none" /><path d="M74.8 94.2 L78.8 90.2 Q79.8 89.3 80.6 90.1 Q81.4 90.9 80.5 91.9 L76.5 95.9" stroke="#d0d0d0" stroke-width="1.1" fill="none" /><path d="M105.0 124.5 V118.0 H111.5 M107.0 120.0 L112.0 125.0 M108.0 125.0 H112.0 V121.0" stroke="#f0f0f0" stroke-width="1.3" fill="none" /><path d="M340.5 124.5 V118.0 H347 M342.5 120.0 L347.5 125.0 M343.5 125.0 H347.5 V121.0" stroke="#f0f0f0" stroke-width="1.3" fill="none" /><path d="M545.5 124.5 V118.0 H552 M547.5 120.0 L552.5 125.0 M548.5 125.0 H552.5 V121.0" stroke="#f0f0f0" stroke-width="1.3" fill="none" /><path d="M253.6 51.9 L256.4 50 V59 M258.9 51.9 L261.7 50 V59" stroke="#f0f0f0" stroke-width="1.25" fill="none" /><path d="M237.5 53.8 L240.75 56.8 L244.0 53.8" stroke="#e8e8e8" stroke-width="1.5" fill="none" /><path d="M282.7 53.8 L285.95 56.8 L289.2 53.8" stroke="#e8e8e8" stroke-width="1.5" fill="none" /><path d="M299.2 59.9 L304.5 48.3 L309.8 59.9 M301.1 55.7 H307.9" stroke="#d8d8d8" stroke-width="1.3" fill="none" /><path d="M309.6 50.8 L311.8 48.7 L314 50.8" stroke="#3a9ee8" stroke-width="1.2" fill="none" /><path d="M326.6 59.9 L330.8 50.5 L335 59.9 M328.2 56.4 H333.4" stroke="#d8d8d8" stroke-width="1.3" fill="none" /><path d="M334.9 48.3 L337.2 50.4 L339.5 48.3" stroke="#3a9ee8" stroke-width="1.2" fill="none" /><path d="M203.5 86 L206.5 89 L209.5 86" stroke="#e0e0e0" stroke-width="1.3" fill="none" /><path d="M225 80 H238 V93 H225 Z" stroke="#f5f5f5" stroke-width="2" fill="none" /><path d="M231.5 81 V93 M226 86.5 H238" stroke="#d8d8d8" stroke-width="1" fill="none" stroke-dasharray="1 1"/><path d="M247.5 86 L250.5 89 L253.5 86" stroke="#e0e0e0" stroke-width="1.3" fill="none" /><path d="M274.6 81.6 L270.5 85.9 L275.2 90.4 L280.2 85.2 L278.2 83.2 M275.6 82.8 V80.4 Q275.8 79.3 276.7 79.3 Q277.6 79.3 277.7 80.4 V84.6" stroke="#e0e0e0" stroke-width="1.25" fill="none" /><path d="M279.9 82.8 Q282.3 83.8 281.8 88.6" stroke="#5aaef0" stroke-width="1.6" fill="none" /><path d="M291.5 86 L294.5 89 L297.5 86" stroke="#e0e0e0" stroke-width="1.3" fill="none" /><path d="M312.4 90 L317.2 79.4 L322 90 M314.2 86 H320.2" stroke="#d8d8d8" stroke-width="1.3" fill="none" /><path d="M332.5 86 L335.5 89 L338.5 86" stroke="#e0e0e0" stroke-width="1.3" fill="none" /><path d="M365 47.5 H379 M367.5 51.5 H376.5 M365 55.5 H379 " stroke="#e6e6e6" stroke-width="1.3" fill="none" /><path d="M391 50.5 H405 M393.5 54.5 H402.5 M391 58.5 H405 " stroke="#e6e6e6" stroke-width="1.3" fill="none" /><path d="M417 54.5 H431 M419.5 58.5 H428.5 M417 62.5 H431 " stroke="#e6e6e6" stroke-width="1.3" fill="none" /><path d="M365 80.5 H379 M365 84.5 H375 M365 88.5 H379 M365 92.5 H375 " stroke="#e6e6e6" stroke-width="1.3" fill="none" /><path d="M391 80.5 H405 M393 84.5 H403 M391 88.5 H405 M393 92.5 H403 " stroke="#e6e6e6" stroke-width="1.3" fill="none" /><path d="M417 80.5 H431 M421 84.5 H431 M417 88.5 H431 M421 92.5 H431 " stroke="#e6e6e6" stroke-width="1.3" fill="none" /><path d="M443 80.5 H457 M451 84.5 H457 M451 88.5 H457 M443 92.5 H457 " stroke="#e6e6e6" stroke-width="1.3" fill="none" /><path d="M469 80.5 H483 M477 84.5 H483 M477 88.5 H483 M469 92.5 H483 " stroke="#e6e6e6" stroke-width="1.3" fill="none" /><path d="M449.5 86.5 H443.5 M446 84 L443.5 86.5 L446 89" stroke="#3a9ee8" stroke-width="1.3" fill="none" /><path d="M469 86.5 H475.5 M473 84 L475.5 86.5 L473 89" stroke="#3a9ee8" stroke-width="1.3" fill="none" /><text x="0" y="0" transform="translate(447,60) rotate(-60)" font-family="Liberation Sans" font-size="11" fill="#d8d8d8">ab</text><path d="M447.5 61 L457.5 51 M453 51 H457.5 V55.5" stroke="#3a9ee8" stroke-width="1.3" fill="none" /><path d="M464 54.5 L467.0 57.5 L470 54.5" stroke="#e0e0e0" stroke-width="1.3" fill="none" /><text x="507" y="54.5" font-family="Liberation Sans" font-size="10.5" fill="#d8d8d8" letter-spacing="0.4">ab</text><text x="507" y="62" font-family="Liberation Sans" font-size="10.5" fill="#d8d8d8">c</text><path d="M521 55 Q521.5 59 514 59 M516.5 56.5 L514 59 L516.5 61.5" stroke="#3a9ee8" stroke-width="1.4" fill="none" /><path d="M505.5 79.5 H519.5 V93.5 H505.5 Z M505.5 83 H519.5 M505.5 90 H519.5 M512.5 79.5 V83 M512.5 90 V93.5 M508 86.5 H517 M510 84.5 L508 86.5 L510 88.5 M515 84.5 L517 86.5 L515 88.5" stroke="#a0a0a0" stroke-width="1.1" fill="none" /><path d="M534 86 L537.0 89 L540 86" stroke="#7a7a7a" stroke-width="1.2" fill="none" /><path d="M646.5 46 L649.5 49 L652.5 46" stroke="#e0e0e0" stroke-width="1.3" fill="none" /><rect x="676.5" y="40.5" width="15.2" height="13.2" fill="#141414" stroke="#e4e4e4" stroke-width="1.1"/><path d="M679 40.5 V53.7 M685 40.5 V53.7 M688.5 40.5 V53.7 M676.5 44.8 H691.7 M676.5 49 H691.7" stroke="#9a9a9a" stroke-width="0.9" fill="none" /><rect x="679.4" y="40.4" width="5.4" height="4.2" fill="#d41a10" stroke="#ff7a7a" stroke-width="0.8"/><rect x="679.4" y="44.8" width="3.4" height="4" fill="#1060c8" stroke="#80c8ff" stroke-width="0.8"/><rect x="679.4" y="49.2" width="7.4" height="4.4" fill="#d41a10" stroke="#ff7a7a" stroke-width="0.8"/></svg>
<div class="t" style="left:179.5px;top:143.69px;font-size:17.5px;line-height:17.5px;color:#d0d0d0;font-weight:normal;font-family:'Liberation Serif', serif;letter-spacing:-0.3px;"><i>fx</i></div>
<div class="r" style="left:565px;top:59px;width:247px;height:560px;border:1px solid #8c8c8c;border-radius:7px;background:#262626;box-shadow:0 3px 10px rgba(0,0,0,0.28);"></div>
<div class="r" style="left:567px;top:157px;width:246px;height:48px;background:#3d3d3d;"></div>
<div class="r" style="left:567px;top:590px;width:247px;height:1px;background:#6a6a6a;"></div>
<div class="t" style="left:627px;top:71.24px;font-size:12px;line-height:12px;color:#f5f5f5;font-weight:bold;">Geral</div>
<div class="t" style="left:627px;top:87.94px;font-size:12px;line-height:12px;color:#f0f0f0;font-weight:normal;">Sem formato específico</div>
<div class="t" style="left:627px;top:119.24px;font-size:12px;line-height:12px;color:#f5f5f5;font-weight:bold;">Número</div>
<div class="t" style="left:627px;top:135.94px;font-size:12px;line-height:12px;color:#f0f0f0;font-weight:normal;">25,90</div>
<div class="t" style="left:627px;top:167.24px;font-size:12px;line-height:12px;color:#f5f5f5;font-weight:bold;">Moeda</div>
<div class="t" style="left:627px;top:183.94px;font-size:12px;line-height:12px;color:#f0f0f0;font-weight:normal;">R$ 25,90</div>
<div class="t" style="left:627px;top:215.24px;font-size:12px;line-height:12px;color:#f5f5f5;font-weight:bold;">Contábil</div>
<div class="t" style="left:627px;top:231.94px;font-size:12px;line-height:12px;color:#f0f0f0;font-weight:normal;">&nbsp;R$ 25,90</div>
<div class="t" style="left:627px;top:263.24px;font-size:12px;line-height:12px;color:#f5f5f5;font-weight:bold;">Data Abreviada</div>
<div class="t" style="left:627px;top:279.94px;font-size:12px;line-height:12px;color:#f0f0f0;font-weight:normal;">25/01/1900</div>
<div class="t" style="left:627px;top:311.24px;font-size:12px;line-height:12px;color:#f5f5f5;font-weight:bold;">Data Completa</div>
<div class="t" style="left:627px;top:327.94px;font-size:12px;line-height:12px;color:#f0f0f0;font-weight:normal;letter-spacing:-0.17px;">quarta-feira, 25 de janeiro de 1900</div>
<div class="t" style="left:627px;top:359.24px;font-size:12px;line-height:12px;color:#f5f5f5;font-weight:bold;">Hora</div>
<div class="t" style="left:627px;top:375.94px;font-size:12px;line-height:12px;color:#f0f0f0;font-weight:normal;">21:36:00</div>
<div class="t" style="left:627px;top:407.24px;font-size:12px;line-height:12px;color:#f5f5f5;font-weight:bold;">Porcentagem</div>
<div class="t" style="left:627px;top:423.94px;font-size:12px;line-height:12px;color:#f0f0f0;font-weight:normal;">2590,00%</div>
<div class="t" style="left:627px;top:455.24px;font-size:12px;line-height:12px;color:#f5f5f5;font-weight:bold;">Fração</div>
<div class="t" style="left:627px;top:471.94px;font-size:12px;line-height:12px;color:#f0f0f0;font-weight:normal;">25 8/9</div>
<div class="t" style="left:627px;top:503.24px;font-size:12px;line-height:12px;color:#f5f5f5;font-weight:bold;">Científico</div>
<div class="t" style="left:627px;top:519.94px;font-size:12px;line-height:12px;color:#f0f0f0;font-weight:normal;">2,59E+01</div>
<div class="t" style="left:627px;top:551.24px;font-size:12px;line-height:12px;color:#f5f5f5;font-weight:bold;">Texto</div>
<div class="t" style="left:627px;top:567.94px;font-size:12px;line-height:12px;color:#f0f0f0;font-weight:normal;">25,9</div>
<div class="t" style="left:604px;top:600.14px;font-size:12px;line-height:12px;color:#f0f0f0;font-weight:normal;letter-spacing:-0.1px;"><u>M</u>ais Formatos de Número...</div>
<div class="r" style="left:598px;top:181px;width:16px;height:17px;background:#3b3b3b;"></div>
<div class="r" style="left:598px;top:229px;width:16px;height:17px;background:#262626;"></div>
<svg class="r" style="left:0;top:0" width="814" height="784"><path d="M586.4 86.7 A8.8 8.8 0 1 1 599.4 84.6" stroke="#3a9ee8" stroke-width="1.3" fill="none" /><path d="M591.5 75.2 V80.8 H596" stroke="#e0e0e0" stroke-width="1.2" fill="none" /><path d="M586.8 88.8 L590.5 86.5 V98.7 M594.3 89 Q595 86.4 597.9 86.4 Q601.5 86.4 601.5 89.4 Q601.5 91.5 599 93.8 L594.2 98.2 H602 M604.2 87 Q605.5 86.4 607.2 86.4 Q610.5 86.4 610.5 89.3 Q610.5 92.2 606.5 92.2 M606.5 92.2 Q611 92.2 611 95.4 Q611 98.7 607 98.7 Q605.2 98.7 604 98" stroke="#d4d4d4" stroke-width="1.3" fill="none" /><path d="M587 128 L592 124.7 V141.8 M597.5 128 Q598.5 124.5 602.3 124.5 Q607 124.5 607 128.8 Q607 131.8 603.5 135 L597.3 141.1 H607.8" stroke="#d4d4d4" stroke-width="1.5" fill="none" /><path d="M583.5 172.5 H610.5 V189.5 H583.5 Z" stroke="#e0e0e0" stroke-width="1.1" fill="none" /><path d="M589.5 175 H586 V187.5 H589.5 M604.5 175 H608.5 V187.5 H604.5" stroke="#e0e0e0" stroke-width="1.1" fill="none" /><ellipse cx="597.2" cy="181.2" rx="4.6" ry="6.3" stroke="#e0e0e0" stroke-width="1.1" fill="none"/><path d="M599.5 185.0 V194.5 A6.5 2.6 0 0 0 612.5 194.5 V185.0 Z" fill="#1c1c1c" stroke="#f0d080" stroke-width="1.1"/><ellipse cx="606" cy="185.1" rx="6.5" ry="2.6" fill="#e8961e" stroke="#f0d080" stroke-width="1.1"/><path d="M599.5 188.5 A6.5 2.6 0 0 0 612.5 188.5 M599.5 191.5 A6.5 2.6 0 0 0 612.5 191.5" fill="none" stroke="#f0d080" stroke-width="1.1"/><path d="M587.5 215.5 H605.5 V242.5 H587.5 Z" stroke="#e0e0e0" stroke-width="1.1" fill="none" /><rect x="590.5" y="218.5" width="12" height="4" fill="#6a6a6a" stroke="#a0a0a0" stroke-width="0.8"/><rect x="590" y="225" width="3" height="3" fill="#e8e8e8"/><rect x="595" y="225" width="3" height="3" fill="#e8e8e8"/><rect x="600" y="225" width="3" height="3" fill="#e8e8e8"/><rect x="590" y="231" width="3" height="3" fill="#e8e8e8"/><rect x="595" y="231" width="3" height="3" fill="#e8e8e8"/><rect x="600" y="231" width="3" height="3" fill="#e8e8e8"/><rect x="590" y="237" width="3" height="3" fill="#e8e8e8"/><rect x="595" y="237" width="3" height="3" fill="#e8e8e8"/><rect x="600" y="237" width="3" height="3" fill="#e8e8e8"/><path d="M599.5 233.0 V242.5 A6.5 2.6 0 0 0 612.5 242.5 V233.0 Z" fill="#1c1c1c" stroke="#f0d080" stroke-width="1.1"/><ellipse cx="606" cy="233.1" rx="6.5" ry="2.6" fill="#e8961e" stroke="#f0d080" stroke-width="1.1"/><path d="M599.5 236.5 A6.5 2.6 0 0 0 612.5 236.5 M599.5 239.5 A6.5 2.6 0 0 0 612.5 239.5" fill="none" stroke="#f0d080" stroke-width="1.1"/><path d="M583.5 265.5 H610.5 V290.5 H583.5 Z M583.5 270 H610.5 M588.5 263 V268 M605.5 263 V268" stroke="#d8d8d8" stroke-width="1.2" fill="none" /><rect x="592" y="279" width="2" height="2" fill="#e8e8e8"/><path d="M583.5 313.5 H610.5 V338.5 H583.5 Z M583.5 318 H610.5 M588.5 311 V316 M605.5 311 V316" stroke="#d8d8d8" stroke-width="1.2" fill="none" /><rect x="592" y="327" width="2" height="2" fill="#e8e8e8"/><circle cx="597" cy="373" r="14" stroke="#d4d4d4" stroke-width="1.2" fill="none"/><path d="M596.5 364.3 V374.3 H605" stroke="#d4d4d4" stroke-width="1.2" fill="none" /><ellipse cx="589.85" cy="414.4" rx="4.5" ry="5.1" stroke="#d4d4d4" stroke-width="1.2" fill="none"/><ellipse cx="604" cy="427.4" rx="4.6" ry="5.1" stroke="#d4d4d4" stroke-width="1.2" fill="none"/><path d="M589.5 432.7 L604.8 409.2" stroke="#d4d4d4" stroke-width="1.2" fill="none" /><path d="M586.9 459 L591 456.6 V469 M589.2 480.6 L605 457 M599.2 471 Q599.8 468.4 603 468.4 Q607 468.4 607 471.3 Q607 473.5 604.5 475.8 L599 481 H607.8" stroke="#d4d4d4" stroke-width="1.2" fill="none" /><path d="M582.8 510.8 L587.5 507.2 V526" stroke="#d4d4d4" stroke-width="1.4" fill="none" /><ellipse cx="597.6" cy="516.6" rx="6" ry="9.2" stroke="#d4d4d4" stroke-width="1.4" fill="none"/><path d="M605.5 505.3 Q606 503.2 608.2 503.2 Q610.7 503.2 610.7 505.5 Q610.7 507.2 608.7 509 L605.4 512.4 H611.2" stroke="#d4d4d4" stroke-width="1.1" fill="none" /><path d="M584.5 563.5 Q586.5 561.5 589 561.5 Q593.3 561.5 593.3 566 V576 M593.3 569.3 Q592 568.6 588.5 568.8 Q583.5 569.3 583.5 572.8 Q583.5 576.3 587.5 576.3 Q591.5 576.3 593.3 572.5" stroke="#d4d4d4" stroke-width="1.2" fill="none" /><path d="M598.5 554 V576 M598.5 565 Q600 561.5 604.3 561.5 Q610.7 561.5 610.7 568.8 Q610.7 576.2 604.3 576.2 Q600 576.2 598.5 572.5" stroke="#d4d4d4" stroke-width="1.2" fill="none" /></svg>
</body></html>
